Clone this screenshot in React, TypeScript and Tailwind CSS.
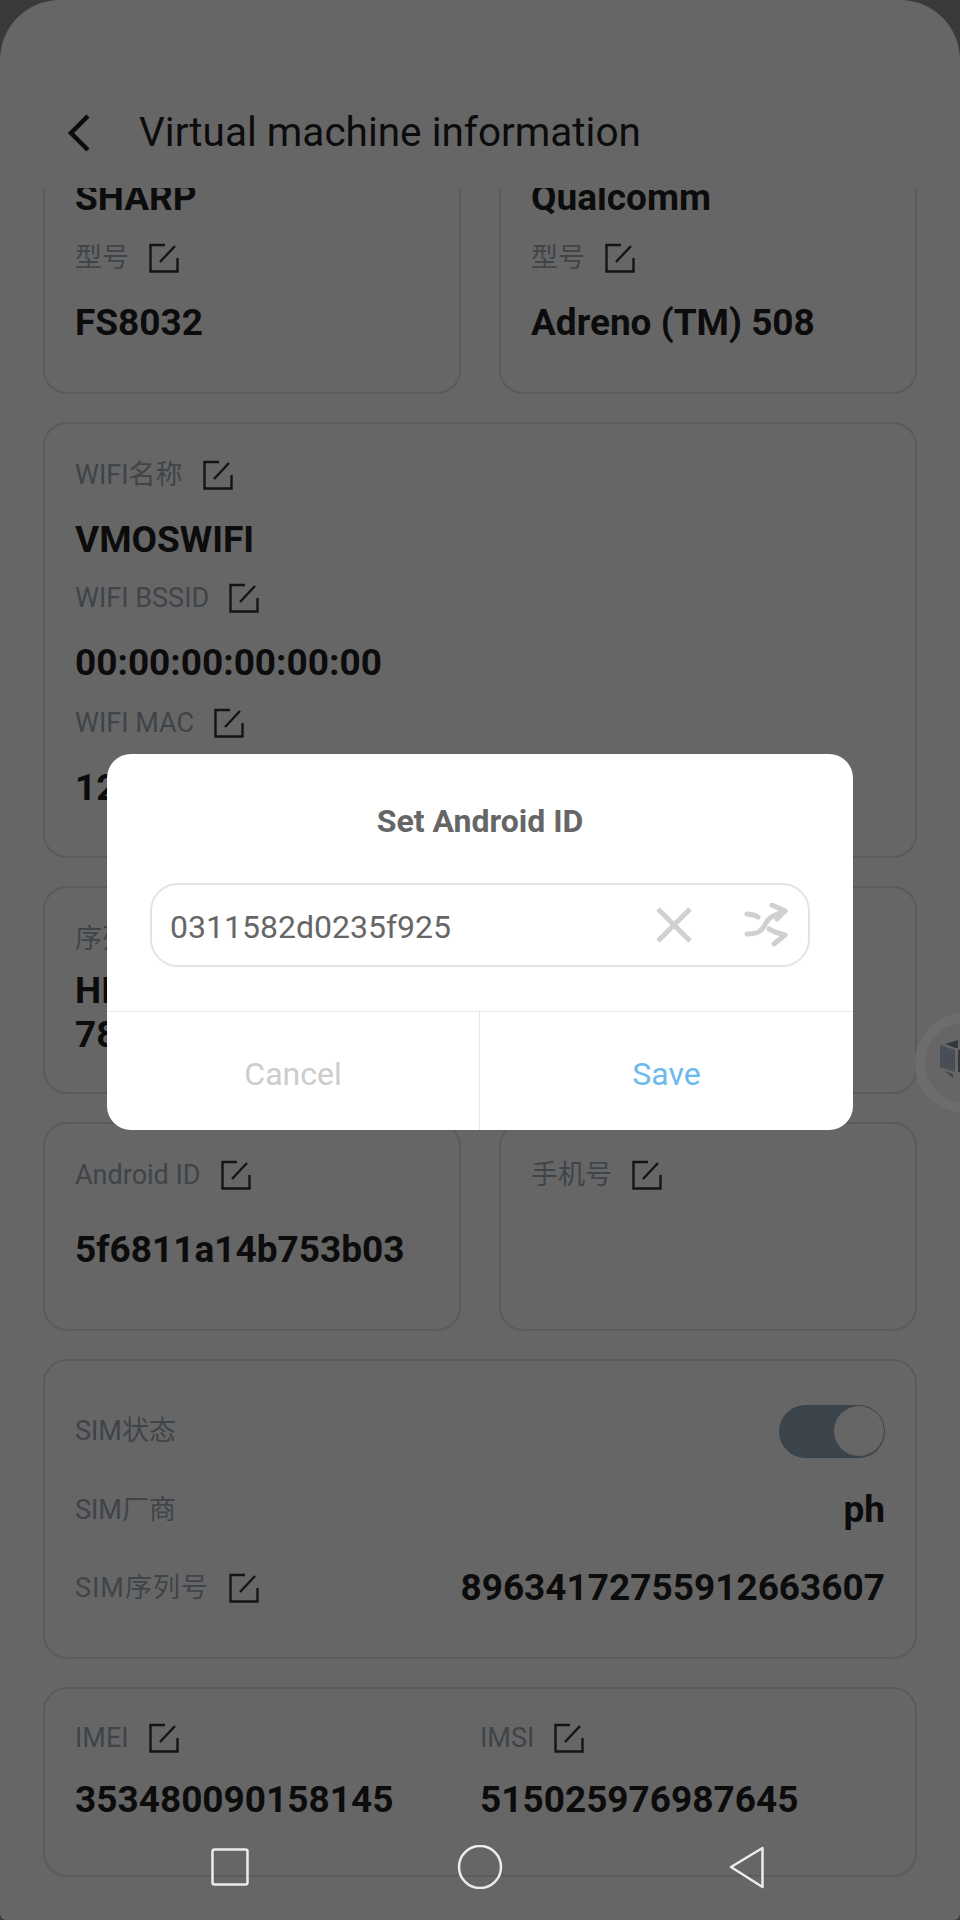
const FONT = "font-['Roboto','Noto_Sans_CJK_SC',sans-serif]"

function EditIcon() {
  return (
    <svg width="30" height="30" viewBox="0 0 30 30" fill="none" stroke="#141414" strokeWidth="2.4" className="shrink-0">
      <path d="M16 2H1.500v26.500h27V15" />
      <path d="M26 3 11 19" />
    </svg>
  )
}

function Label({ text, edit = true, className = '' }: { text: string; edit?: boolean; className?: string }) {
  return (
    <div className={`flex items-center gap-[20px] h-[34px] text-[27px] text-[#3f4449] ${className}`}>
      <span>{text}</span>
      {edit && <EditIcon />}
    </div>
  )
}

function Value({ children, className = '' }: { children: React.ReactNode; className?: string }) {
  return <div className={`text-[37px] leading-[44px] font-bold text-[#0c0c0c] ${className}`}>{children}</div>
}

function Card({ children, className = '' }: { children: React.ReactNode; className?: string }) {
  return (
    <div className={`rounded-[24px] border-2 border-[#5b5b5b] ${className}`}>{children}</div>
  )
}

export default function App() {
  return (
    <div className={`relative w-[960px] h-[1920px] bg-[#3a3a3a] overflow-hidden ${FONT}`}>
      <div className="flex flex-col h-full bg-[#666666] rounded-t-[60px] rounded-b-[6px] overflow-hidden">
        <header className="flex items-center h-[188px] pt-[77px] pl-[64px] shrink-0">
          <svg width="28" height="38" viewBox="0 0 28 38" fill="none" stroke="#0c0c0c" strokeWidth="4.5">
            <path d="M24 2 7 19l17 17" />
          </svg>
          <h1 className="ml-[47px] text-[40.5px] text-[#0c0c0c]">Virtual machine information</h1>
        </header>

        <main className="flex-1 overflow-hidden flex flex-col gap-[28px] px-[43px]">
          <div className="grid grid-cols-2 gap-[38px] -mt-[40px]">
            {[['SHARP', 'FS8032'], ['Qualcomm', 'Adreno (TM) 508']].map(([brand, model]) => (
              <Card key={brand} className="h-[246px] pl-[30px]">
                <Value className="pt-[26px]">{brand}</Value>
                <Label text="型号" className="mt-[21px]" />
                <Value className="mt-[26px]">{model}</Value>
              </Card>
            ))}
          </div>

          <Card className="h-[436px] pl-[30px] pt-[34px]">
            <Label text="WIFI名称" />
            <Value className="mt-[26px]">VMOSWIFI</Value>
            <Label text="WIFI BSSID" className="mt-[19px]" />
            <Value className="mt-[26px]">00:00:00:00:00:00</Value>
            <Label text="WIFI MAC" className="mt-[21px]" />
            <Value className="mt-[26px]">12</Value>
          </Card>

          <Card className="h-[208px] pl-[30px] pt-[34px]">
            <Label text="序列号" />
            <Value className="mt-[13px] leading-[41px]">
              HI
              <br />
              78
            </Value>
          </Card>

          <div className="grid grid-cols-2 gap-[38px]">
            <Card className="h-[209px] pl-[30px] pt-[34px]">
              <Label text="Android ID" />
              <Value className="mt-[36px]">5f6811a14b753b03</Value>
            </Card>
            <Card className="h-[209px] pl-[30px] pt-[34px]">
              <Label text="手机号" />
            </Card>
          </div>

          <Card className="h-[300px] px-[30px] pt-[53px] flex flex-col">
            <div className="flex items-center justify-between h-[34px]">
              <Label text="SIM状态" edit={false} />
              <div className="w-[106px] h-[53px] rounded-full bg-[#3c444b] flex justify-end">
                <div className="w-[50px] h-[50px] mt-[1.5px] mr-[1.5px] rounded-full bg-[#666666]" />
              </div>
            </div>
            <div className="flex items-center justify-between h-[34px] mt-[45px]">
              <Label text="SIM厂商" edit={false} />
              <Value>ph</Value>
            </div>
            <div className="flex items-center justify-between h-[34px] mt-[44px]">
              <Label text="SIM序列号" className="tracking-[1px]" />
              <Value>89634172755912663607</Value>
            </div>
          </Card>

          <Card className="h-[190px] pl-[30px] pt-[32px] grid grid-cols-[405px_1fr]">
            <div>
              <Label text="IMEI" />
              <Value className="mt-[23px]">353480090158145</Value>
            </div>
            <div>
              <Label text="IMSI" />
              <Value className="mt-[23px]">515025976987645</Value>
            </div>
          </Card>
        </main>
      </div>

      {/* floating button, half off screen */}
      <div className="absolute left-[915px] top-[1013px] w-[100px] h-[100px] rounded-full border-[10px] border-[#6d6d6d] bg-[#666666] flex items-center justify-center">
        <svg width="40" height="40" viewBox="0 0 40 40" className="-ml-[14px] -mt-[10px]">
          <path d="M7 6 20 2V10L17 10Z" fill="#33383d" />
          <path d="M2 7 17 12V34L2 29Z" fill="#474e56" />
          <path d="M20 12 24 11V34L20 34Z" fill="#33383d" />
          <path d="M7 33 15 36V40Z" fill="#3d4248" />
        </svg>
      </div>

      {/* nav bar */}
      <div className="absolute left-0 right-0 top-[1845px] h-[44px] flex items-center">
        <svg width="960" height="44" viewBox="0 0 960 44" fill="none" stroke="#ececec" strokeWidth="2.500">
          <rect x="212.500" y="4.500" width="35" height="35" rx="2" />
          <circle cx="480" cy="22" r="21" />
          <path d="M762.500 3 731 22l31.500 20Z" strokeLinejoin="round" />
        </svg>
      </div>

      {/* dialog */}
      <div className="absolute left-[107px] top-[754px] w-[746px] h-[376px] bg-white rounded-[24px] flex flex-col overflow-hidden">
        <div className="text-center text-[32px] font-bold text-[#666666] pt-[46px] leading-[42px]">Set Android ID</div>
        <div className="mt-[41px] mx-[43px] h-[84px] rounded-[28px] border-2 border-[#e3e3e3] flex items-center pl-[18px]">
          <span className="text-[32px] leading-[40px] pt-[4px] text-[#666666] flex-1">0311582d0235f925</span>
          <svg width="38" height="38" viewBox="0 0 38 38" fill="none" stroke="#d0d0d0" strokeWidth="5">
            <path d="M3 3l32 32M35 3 3 35" />
          </svg>
          <svg width="44" height="44" viewBox="0 0 44 44" fill="none" stroke="#d0d0d0" strokeWidth="5" strokeLinecap="round" strokeLinejoin="round" className="ml-[51px] mr-[20px]">
            <path d="M3 11c5 0 8 1 11 3" />
            <path d="M3 31c6 0 10-1 13-3 4-3 5-8 9-12 4-4 10-6 16-8" />
            <path d="M28 2 41 8 33 16" />
            <path d="M25 26c5 3 10 5 16 6L30 41" />
          </svg>
        </div>
        <div className="mt-[44px] flex-1 grid grid-cols-2 border-t border-[#e6e6e6] text-[32px]">
          <button className="text-[#cccccc] border-r border-[#e6e6e6] pt-[5px]">Cancel</button>
          <button className="text-[#6cb9ee] pt-[5px]">Save</button>
        </div>
      </div>
    </div>
  )
}
